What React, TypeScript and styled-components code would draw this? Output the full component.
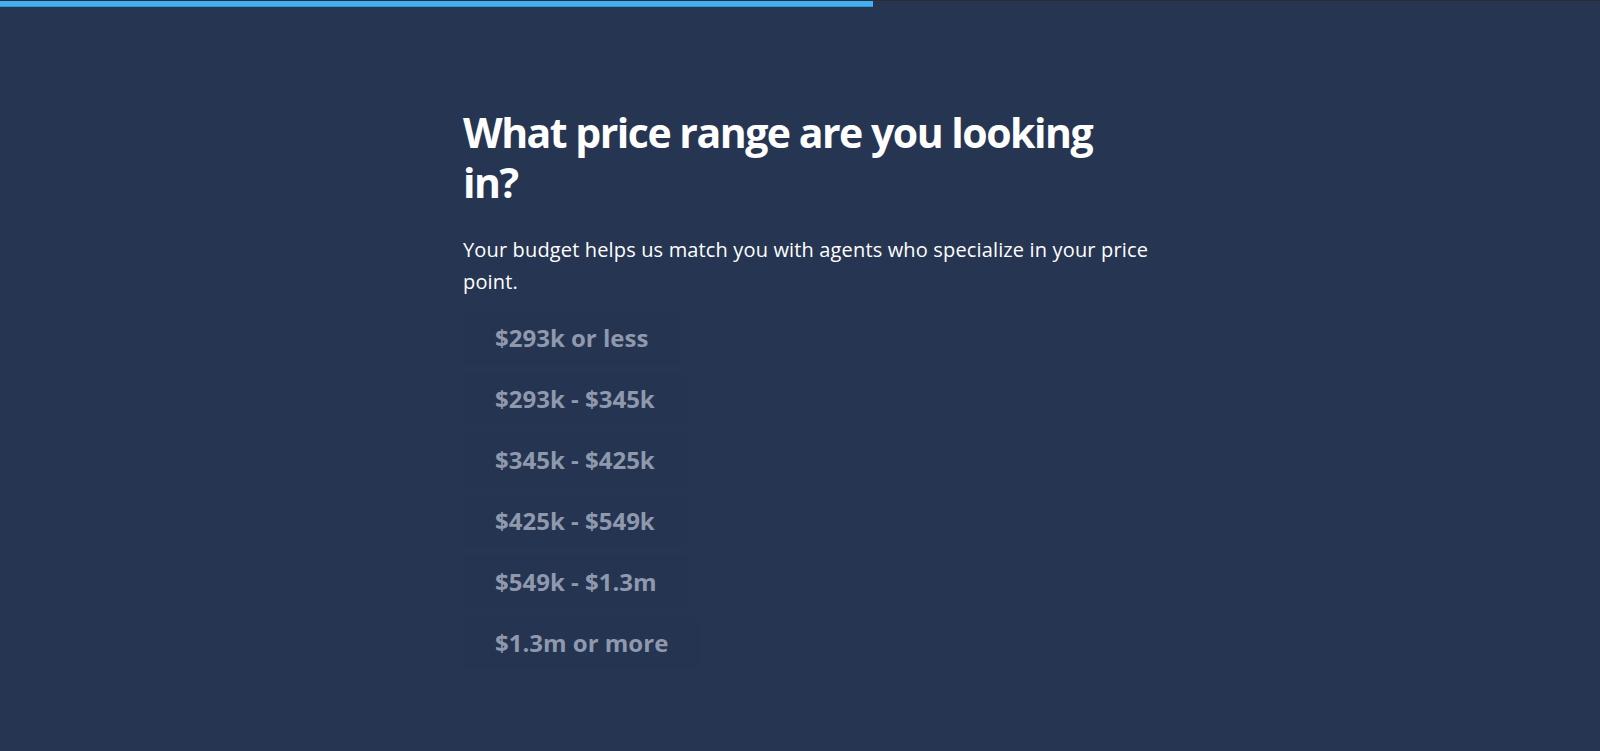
import styled, { createGlobalStyle } from 'styled-components';

const options = [
    '$293k or less',
    '$293k - $345k',
    '$345k - $425k',
    '$425k - $549k',
    '$549k - $1.3m',
    '$1.3m or more',
];

const GlobalStyle = createGlobalStyle`
    html, body {
        margin: 0;
        padding: 0;
        background: #263552;
    }

    body {
        font-family: "Open Sans", "Noto Sans", sans-serif;
        -webkit-font-smoothing: antialiased;
    }
`;

const Page = styled.div`
    min-height: 751px;
    background: #263552;
    border-top: 1px solid #2b2d33;
    box-sizing: border-box;
`;

const Progress = styled.div`
    height: 6px;
`;

const ProgressFill = styled.div`
    height: 100%;
    background: #40b1f7;
    border-bottom: 1px solid #3a94d0;
    box-sizing: border-box;
`;

const Container = styled.main`
    width: 710px;
    box-sizing: border-box;
    margin: 0 auto;
    padding: 100px 0 0 18px;
`;

const Title = styled.h1`
    margin: 0;
    font-size: 41px;
    line-height: 50px;
    font-weight: 700;
    color: #ffffff;
    letter-spacing: -1.5px;
`;

const Subtitle = styled.p`
    margin: 27px 0 0;
    font-size: 20px;
    line-height: 32px;
    letter-spacing: 0.15px;
    color: #ffffff;
`;

const OptionList = styled.div`
    display: flex;
    flex-direction: column;
    align-items: flex-start;
    gap: 9px;
    margin-top: 14px;
`;

const OptionButton = styled.button`
    border: none;
    background: #253451;
    color: #8f99ad;
    font-family: inherit;
    font-size: 24px;
    font-weight: 700;
    line-height: 32px;
    padding: 10px 32px;
    margin: 0;
    border-radius: 2px;
    cursor: pointer;
    text-align: left;
`;

export default function App() {
    const progress = 873;

    return (
        <>
            <GlobalStyle />
            <Page>
                <Progress>
                    <ProgressFill style={{ width: progress }} />
                </Progress>
                <Container>
                    <Title>What price range are you looking in?</Title>
                    <Subtitle>
                        Your budget helps us match you with agents who specialize in your price point.
                    </Subtitle>
                    <OptionList>
                        {options.map(option => (
                            <OptionButton key={option}>{option}</OptionButton>
                        ))}
                    </OptionList>
                </Container>
            </Page>
        </>
    );
}
